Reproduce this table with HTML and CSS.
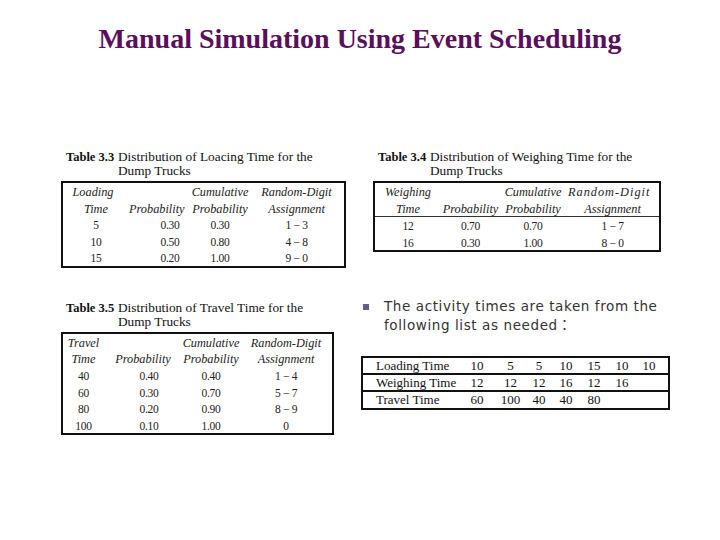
FILE: index.html
```html
<!DOCTYPE html>
<html lang="en">
<head>
<meta charset="utf-8">
<title>Manual Simulation Using Event Scheduling</title>
<link rel="stylesheet" href="styles.css">
</head>
<body>
<div class="slide">
  <h1 class="title">Manual Simulation Using Event Scheduling</h1>
  <div class="content">
    <figure class="dist">
      <figcaption class="caption"><span class="cap-label">Table 3.3</span><span class="cap-text">Distribution of Loacing Time for the<br>Dump Trucks</span></figcaption>
      <table class="dtable t33">
        <colgroup><col class="w66"><col class="w62"><col class="w58"><col class="w95"></colgroup>
        <tr><th class="shift">Loading</th><th></th><th>Cumulative</th><th>Random-Digit</th></tr>
        <tr><th>Time</th><th class="pl-head">Probability</th><th>Probability</th><th>Assignment</th></tr>
        <tr><td>5</td><td class="pl-val">0.30</td><td>0.30</td><td>1 &#8722; 3</td></tr>
        <tr><td>10</td><td class="pl-val">0.50</td><td>0.80</td><td>4 &#8722; 8</td></tr>
        <tr><td>15</td><td class="pl-val">0.20</td><td>1.00</td><td>9 &#8722; 0</td></tr>
      </table>
    </figure>

    <figure class="dist dist-right">
      <figcaption class="caption"><span class="cap-label">Table 3.4</span><span class="cap-text">Distribution of Weighing Time for the<br>Dump Trucks</span></figcaption>
      <table class="dtable t34">
        <colgroup><col class="w66"><col class="w59"><col class="w66"><col class="w93"></colgroup>
        <tr><th>Weighing</th><th></th><th>Cumulative</th><th class="wide">Random-Digit</th></tr>
        <tr class="sep"><th>Time</th><th>Probability</th><th>Probability</th><th>Assignment</th></tr>
        <tr><td>12</td><td>0.70</td><td>0.70</td><td>1 &#8722; 7</td></tr>
        <tr><td>16</td><td>0.30</td><td>1.00</td><td>8 &#8722; 0</td></tr>
      </table>
    </figure>

    <figure class="dist dist-low">
      <figcaption class="caption"><span class="cap-label">Table 3.5</span><span class="cap-text">Distribution of Travel Time for the<br>Dump Trucks</span></figcaption>
      <table class="dtable t35">
        <colgroup><col class="w41"><col class="w78"><col class="w58"><col class="w92"></colgroup>
        <tr><th>Travel</th><th></th><th>Cumulative</th><th>Random-Digit</th></tr>
        <tr><th>Time</th><th>Probability</th><th>Probability</th><th>Assignment</th></tr>
        <tr><td>40</td><td class="nudge">0.40</td><td>0.40</td><td>1 &#8722; 4</td></tr>
        <tr><td>60</td><td class="nudge">0.30</td><td>0.70</td><td>5 &#8722; 7</td></tr>
        <tr><td>80</td><td class="nudge">0.20</td><td>0.90</td><td>8 &#8722; 9</td></tr>
        <tr><td>100</td><td class="nudge">0.10</td><td>1.00</td><td>0</td></tr>
      </table>
    </figure>

    <div class="notes">
      <div class="bullet-item">
        <span class="bullet"></span>
        <p class="bullet-text">The activity times are taken from the following list as needed&#65306;</p>
      </div>
      <table class="list-table">
        <colgroup><col class="w96"><col class="w36"><col class="w31"><col class="w26"><col class="w28"><col class="w28"><col class="w28"><col class="w32"></colgroup>
        <tr><td class="label">Loading Time</td><td>10</td><td>5</td><td>5</td><td>10</td><td>15</td><td>10</td><td class="last">10</td></tr>
        <tr><td class="label">Weighing Time</td><td>12</td><td>12</td><td>12</td><td>16</td><td>12</td><td>16</td><td class="last"></td></tr>
        <tr class="tall"><td class="label">Travel Time</td><td>60</td><td>100</td><td>40</td><td>40</td><td>80</td><td></td><td class="last"></td></tr>
      </table>
    </div>
  </div>
</div>
</body>
</html>
```
FILE: styles.css
```css
* { box-sizing: border-box; }

html, body {
  margin: 0;
  padding: 0;
  background: #ffffff;
}

body {
  width: 720px;
  height: 540px;
  overflow: hidden;
  font-family: "Liberation Serif", "Times New Roman", serif;
  color: #111111;
}

.slide {
  width: 720px;
  height: 540px;
}

.title {
  margin: 0;
  padding-top: 23px;
  height: 55px;
  text-align: center;
  font-size: 28px;
  line-height: 32px;
  font-weight: bold;
  color: #5a0f5c;
}

.content {
  display: grid;
  grid-template-columns: 300px 1fr;
  align-items: start;
  row-gap: 28px;
  padding-left: 61px;
  margin-top: 95px;
}

.dist {
  margin: 0;
}

.dist-right {
  margin-left: 12px;
}

.dist-low {
  padding-top: 5px;
}

.caption {
  display: flex;
  padding-left: 5px;
  margin-bottom: 3px;
  font-size: 13.3px;
  line-height: 14px;
  color: #111111;
}

.cap-label {
  flex: none;
  width: 52px;
  font-size: 12.5px;
  font-weight: bold;
}

.dtable {
  border: 2px solid #111111;
  border-collapse: separate;
  border-spacing: 0;
  table-layout: fixed;
  color: #222222;
}

.t33 { width: 285px; }
.t34 { width: 288px; }
.t35 { width: 273px; }

.dtable th,
.dtable td {
  padding: 0;
  height: 16.5px;
  line-height: 14px;
  text-align: center;
  white-space: nowrap;
  font-weight: normal;
}

.dtable th {
  font-size: 12.3px;
  font-style: italic;
  padding-top: 2px;
}

.dtable td {
  font-size: 11.5px;
  letter-spacing: -0.3px;
  padding-top: 2px;
}

.t35 th,
.t35 td {
  height: 16.6px;
}

.dtable .shift {
  padding-right: 6px;
}

.dtable .pl-head {
  padding-right: 12px;
}

.dtable .pl-val {
  padding-left: 20px;
}

.dtable .nudge {
  padding-left: 12px;
}

.dtable .wide {
  text-align: left;
  padding-left: 2px;
  letter-spacing: 1px;
}

.sep th {
  border-bottom: 1px solid #333333;
  height: 17.5px;
}

.w26 { width: 26px; }
.w28 { width: 28px; }
.w31 { width: 31px; }
.w32 { width: 32px; }
.w36 { width: 36px; }
.w41 { width: 41px; }
.w58 { width: 58px; }
.w59 { width: 59px; }
.w62 { width: 62px; }
.w66 { width: 66px; }
.w78 { width: 78px; }
.w92 { width: 92px; }
.w93 { width: 93px; }
.w95 { width: 95px; }
.w96 { width: 96px; }

.notes {
  padding-left: 2px;
}

.bullet-item {
  display: flex;
  align-items: flex-start;
  margin-top: 1.5px;
}

.bullet {
  flex: none;
  width: 6px;
  height: 6px;
  margin-top: 6.5px;
  margin-right: 15px;
  background: #5e5f90;
}

.bullet-text {
  margin: 0;
  width: 292px;
  font-family: "DejaVu Sans", "Noto Sans CJK KR", sans-serif;
  font-size: 13.5px;
  letter-spacing: 0.6px;
  line-height: 18.5px;
  color: #333333;
}

.list-table {
  margin-top: 21.5px;
  margin-left: -2px;
  width: 309px;
  border: 2px solid #111111;
  border-collapse: separate;
  border-spacing: 0;
  table-layout: fixed;
  font-size: 13px;
  color: #111111;
}

.list-table td {
  padding: 0;
  height: 15px;
  line-height: 15px;
  text-align: center;
  white-space: nowrap;
}

.list-table tr + tr td {
  border-top: 2px solid #111111;
  height: 17px;
}

.list-table .tall td {
  height: 18px;
}

.list-table .label {
  text-align: left;
  padding-left: 13px;
}

.list-table .last {
  padding-right: 6px;
}
```
